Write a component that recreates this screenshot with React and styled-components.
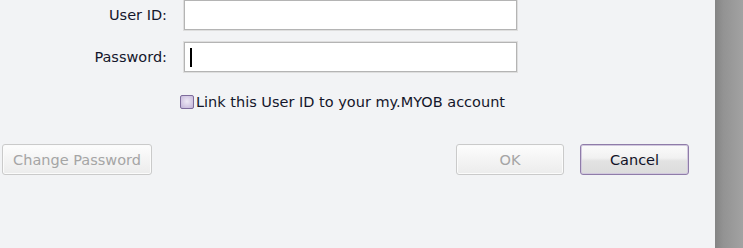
import styled, { createGlobalStyle } from "styled-components"

const GlobalStyle = createGlobalStyle`
    html, body {
        margin: 0;
        padding: 0;
        background: #f2f3f5;
    }
    body {
        font-family: "DejaVu Sans", Verdana, sans-serif;
    }
`;

const App = () => {
    return (
        <>
            <GlobalStyle />
            <Window>
                <Dialog>
                    <Form>
                        <Label>User ID:</Label>
                        <TextBox />
                        <Label>Password:</Label>
                        <TextBox>
                            <Caret />
                        </TextBox>
                        <span />
                        <CheckRow>
                            <CheckBox />
                            <CheckText>Link this User ID to your my.MYOB account</CheckText>
                        </CheckRow>
                    </Form>
                    <ButtonBar>
                        <Button disabled width={150}>Change Password</Button>
                        <Spacer />
                        <Button disabled width={108}>OK</Button>
                        <Button width={109} primary>Cancel</Button>
                    </ButtonBar>
                </Dialog>
                <Shade />
            </Window>
        </>
    )
}

const Window = styled.div`
    display: flex;
    width: 743px;
    height: 248px;
    overflow: hidden;
    background: #f2f3f5;
`;

const Dialog = styled.div`
    flex: 1;
    display: flex;
    flex-direction: column;
    padding: 0 26px 0 2px;
`;

const Form = styled.div`
    display: grid;
    grid-template-columns: 165px 333px;
    column-gap: 17px;
    row-gap: 12px;
    align-items: center;
`;

const Label = styled.div`
    text-align: right;
    font-size: 14.5px;
    color: #14162b;
`;

const TextBox = styled.div`
    box-sizing: border-box;
    height: 30px;
    background: #fff;
    border: 1px solid #b4b4b4;
    box-shadow: 0 0 0 1px #dedede;
    display: flex;
    align-items: center;
    padding-left: 5px;
`;

const Caret = styled.div`
    width: 2px;
    height: 19px;
    background: #000;
`;

const CheckRow = styled.div`
    display: flex;
    align-items: center;
    gap: 2px;
    margin-left: -4px;
    margin-top: 10px;
`;

const CheckBox = styled.div`
    box-sizing: border-box;
    width: 14px;
    height: 14px;
    border: 1px solid #7e6c9c;
    border-radius: 2px;
    background: radial-gradient(circle at 50% 45%, #eee9f5 0%, #d4c9e4 60%, #bfb1d6 100%);
`;

const CheckText = styled.div`
    font-size: 14.5px;
    color: #14162b;
`;

const ButtonBar = styled.div`
    display: flex;
    align-items: center;
    gap: 16px;
    margin-top: 34px;
`;

const Spacer = styled.div`
    flex: 1;
`;

const Button = styled.button`
    box-sizing: border-box;
    width: ${(p) => p.width}px;
    height: 31px;
    padding: 0;
    font-family: "DejaVu Sans", Verdana, sans-serif;
    font-size: 14.5px;
    border-radius: 3px;
    color: ${(p) => (p.disabled ? "#a5a5a5" : "#101226")};
    border: 1px solid ${(p) => (p.primary ? "#8f7ca9" : "#cacaca")};
    box-shadow: inset 0 0 0 1px ${(p) => (p.primary ? "#d2c9de" : "#fbfbfb")};
    background: ${(p) =>
        p.primary
            ? "linear-gradient(#fbfbfb 0%, #f1f1f1 45%, #e2e2e2 55%, #dcdcdc 100%)"
            : "linear-gradient(#fdfdfd 0%, #f4f4f4 50%, #ececec 100%)"};
`;

const Shade = styled.div`
    width: 28px;
    background: linear-gradient(to right, #848484 0%, #939393 30%, #a2a2a2 100%);
`;

export default App;
